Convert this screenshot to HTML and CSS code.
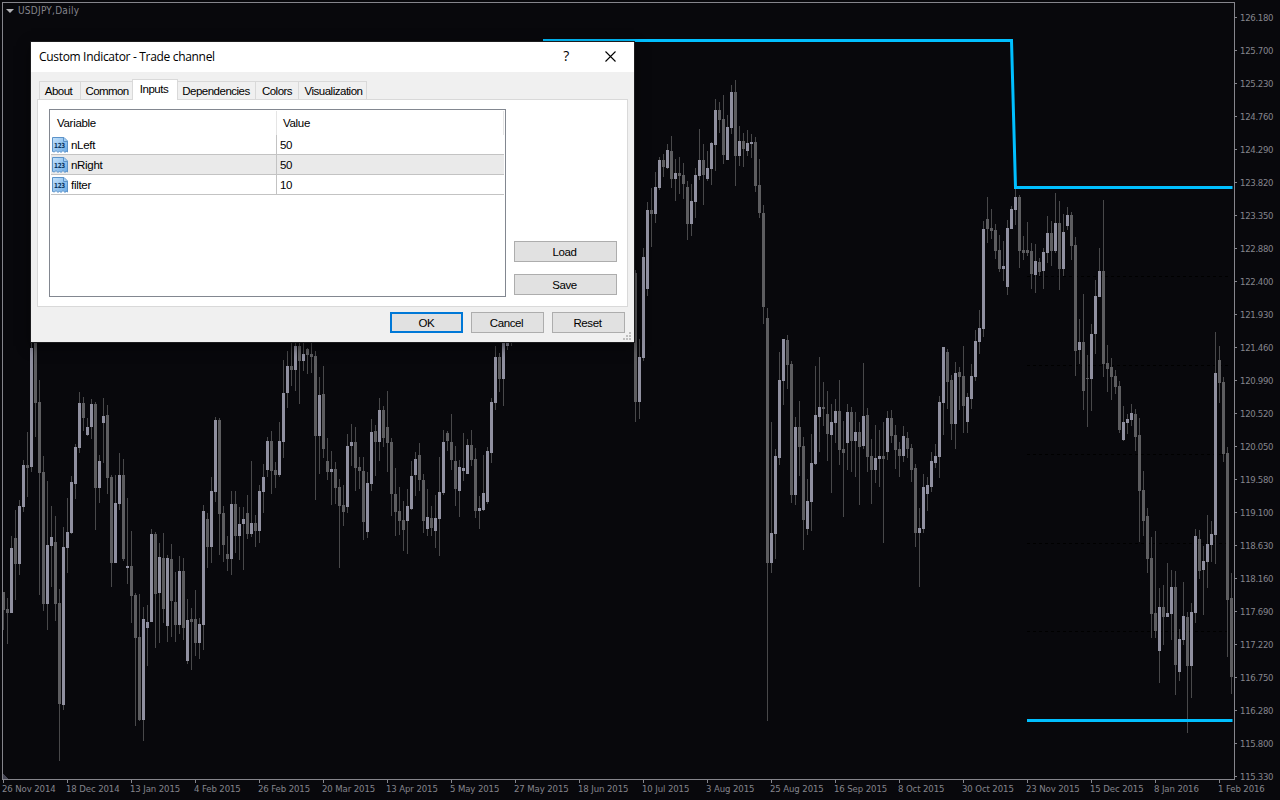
FILE: index.html
```
<!DOCTYPE html>
<html lang="en">

<head>
    <meta charset="UTF-8">
    <meta name="viewport" content="width=device-width, initial-scale=1.0">
    <title>USDJPY,Daily</title>
    <link rel="stylesheet" href="styles.css">
</head>

<body>
    <div class="chart">
        <svg class="plot" width="1235" height="780" viewBox="0 0 1235 780" shape-rendering="crispEdges">
            <path class="levels" d="M1027 276.5H1229M1027 365.5H1229M1027 454.5H1229M1027 543.5H1229M1027 631.5H1229" />
            <path class="wick" id="wicks" />
            <path class="bear" id="bears" />
            <path class="bull" id="bulls" />
            <path class="channel" d="M543 40.5H1011.5L1015.5 187.5H1232.5M1027 720.5H1232.5" shape-rendering="auto" />
            <path class="corner" d="M3 774L8 779H3Z" />
            <path class="frame" d="M1235 2.5H2.5V779.5H1234.5V2" />
        </svg>
        <div class="prices">
            <span>126.180</span>
            <span>125.700</span>
            <span>125.230</span>
            <span>124.760</span>
            <span>124.290</span>
            <span>123.820</span>
            <span>123.350</span>
            <span>122.880</span>
            <span>122.400</span>
            <span>121.930</span>
            <span>121.460</span>
            <span>120.990</span>
            <span>120.520</span>
            <span>120.050</span>
            <span>119.580</span>
            <span>119.100</span>
            <span>118.630</span>
            <span>118.160</span>
            <span>117.690</span>
            <span>117.220</span>
            <span>116.750</span>
            <span>116.280</span>
            <span>115.800</span>
            <span>115.330</span>
        </div>
        <div class="dates">
            <span>26 Nov 2014</span>
            <span>18 Dec 2014</span>
            <span>13 Jan 2015</span>
            <span>4 Feb 2015</span>
            <span>26 Feb 2015</span>
            <span>20 Mar 2015</span>
            <span>13 Apr 2015</span>
            <span>5 May 2015</span>
            <span>27 May 2015</span>
            <span>18 Jun 2015</span>
            <span>10 Jul 2015</span>
            <span>3 Aug 2015</span>
            <span>25 Aug 2015</span>
            <span>16 Sep 2015</span>
            <span>8 Oct 2015</span>
            <span>30 Oct 2015</span>
            <span>23 Nov 2015</span>
            <span>15 Dec 2015</span>
            <span>8 Jan 2016</span>
            <span>1 Feb 2016</span>
        </div>
        <div class="symbol">
            <svg width="8" height="4" viewBox="0 0 8 4"><path d="M0 0H8L4 4Z" fill="#b4b4b8" /></svg>
            <span>USDJPY,Daily</span>
        </div>
    </div>

    <svg class="defs" width="0" height="0">
        <defs>
            <linearGradient id="sheet" x1="0" y1="0" x2="1" y2="1">
                <stop offset="0" stop-color="#c4e2fb" />
                <stop offset="1" stop-color="#6aa9e4" />
            </linearGradient>
            <symbol id="int-icon" viewBox="0 0 16 16">
                <path d="M.5 .5H12L15.500 4V15L14 14L13 15.500L11 13.500L9 15.500L7.500 14L6 15.500L4 13.500L2.500 15L.5 14.500Z" fill="url(#sheet)" stroke="#5c93c9" />
                <path d="M11.500 .5V4.500H15.500" fill="#a9d0f3" stroke="#5c93c9" />
                <text x="7.500" y="11.200" text-anchor="middle" textLength="11" lengthAdjust="spacingAndGlyphs">123</text>
            </symbol>
        </defs>
    </svg>

    <div class="dialog">
        <div class="titlebar">
            <span class="title">Custom Indicator - Trade channel</span>
            <span class="help">?</span>
            <svg class="close" width="11" height="11" viewBox="0 0 11 11"><path d="M.5 .5L10.500 10.500M10.500 .5L.5 10.500" stroke="#000" stroke-width="1.100" /></svg>
        </div>
        <div class="tabs">
            <div class="tab about">About</div>
            <div class="tab common">Common</div>
            <div class="tab active">Inputs</div>
            <div class="tab dependencies">Dependencies</div>
            <div class="tab colors">Colors</div>
            <div class="tab visualization">Visualization</div>
        </div>
        <div class="pane">
            <div class="list">
                <div class="row head"><span class="name">Variable</span><span class="value">Value</span></div>
                <div class="row">
                    <span class="name"><svg width="16" height="16"><use href="#int-icon" /></svg><span>nLeft</span></span>
                    <span class="value">50</span>
                </div>
                <div class="row selected">
                    <span class="name"><svg width="16" height="16"><use href="#int-icon" /></svg><span>nRight</span></span>
                    <span class="value">50</span>
                </div>
                <div class="row">
                    <span class="name"><svg width="16" height="16"><use href="#int-icon" /></svg><span>filter</span></span>
                    <span class="value">10</span>
                </div>
            </div>
            <div class="side">
                <button>Load</button>
                <button>Save</button>
            </div>
        </div>
        <div class="footer">
            <button class="default">OK</button>
            <button>Cancel</button>
            <button>Reset</button>
        </div>
        <svg class="grip" width="8" height="8" viewBox="0 0 8 8" shape-rendering="crispEdges">
            <path d="M6 0h2v2h-2zM3 3h2v2h-2zM6 3h2v2h-2zM0 6h2v2h-2zM3 6h2v2h-2zM6 6h2v2h-2z" fill="#bfbfbf" />
        </svg>
    </div>

    <script src="candles.js"></script>
</body>

</html>
```
FILE: styles.css
```
* {
    box-sizing: border-box;
}

body {
    margin: 0;
    width: 1280px;
    height: 800px;
    overflow: hidden;
    background: #08080c;
    font-family: "Liberation Sans", Arial, sans-serif;
}

.chart {
    position: relative;
    display: grid;
    grid-template-columns: 1235px 45px;
    grid-template-rows: 780px 20px;
    color: #85858c;
    font-family: "DejaVu Sans Condensed", "DejaVu Sans", sans-serif;
    font-stretch: condensed;
    font-size: 9.5px;
    letter-spacing: -0.3px;
}

.plot {
    display: block;
    fill: none;
}

.frame {
    stroke: #85858c;
}

.corner {
    fill: #464655;
}

.wick {
    stroke: #48484a;
}

.bear {
    stroke: #5d5d60;
    stroke-width: 3;
}

.bull {
    stroke: #9090a0;
    stroke-width: 3;
}

.levels {
    stroke: #000;
    stroke-dasharray: 3 3;
}

.channel {
    stroke: #00bfff;
    stroke-width: 3;
}

.prices {
    grid-column: 2;
    grid-row: 1 / 3;
    height: 800px;
    padding-top: 1px;
    overflow: hidden;
}

.prices span {
    display: flex;
    align-items: center;
    height: 33px;
}

.prices span::before {
    content: "";
    width: 2px;
    height: 1px;
    margin-right: 3px;
    background: #85858c;
}

.dates {
    grid-column: 1;
    grid-row: 2;
    display: flex;
    padding-left: 2px;
    letter-spacing: -0.1px;
}

.dates span {
    flex: none;
    width: 64px;
    line-height: 12px;
    white-space: nowrap;
}

.dates span::before {
    content: "";
    display: block;
    width: 1px;
    height: 3px;
    margin-left: 1px;
    background: #85858c;
}

.symbol {
    position: absolute;
    left: 6px;
    top: 4px;
    display: flex;
    align-items: center;
    gap: 4px;
    font-size: 10px;
    line-height: 14px;
    letter-spacing: 0.25px;
}

.defs {
    position: absolute;
}

.defs text {
    font: bold 7px "DejaVu Sans", sans-serif;
    fill: #0c3560;
}

.dialog {
    position: absolute;
    left: 31px;
    top: 42px;
    width: 603px;
    height: 300px;
    background: #f0f0f0;
    box-shadow: 0 0 0 1px #1c1c1e, 0 4px 12px rgba(0, 0, 0, 0.6);
    color: #000;
    font-size: 11.5px;
    letter-spacing: -0.5px;
}

.titlebar {
    display: flex;
    align-items: center;
    height: 30px;
    padding: 0 18px 0 8px;
    background: #fff;
    font-family: "Open Sans", "Noto Sans", sans-serif;
    font-size: 12px;
    line-height: 16px;
    letter-spacing: -0.32px;
}

.title {
    flex: 1;
}

.help {
    margin-right: 36px;
    padding-bottom: 2px;
    font-size: 14px;
}

.close {
    margin-bottom: 2px;
}

.tabs {
    display: flex;
    align-items: flex-end;
    height: 28px;
    padding-left: 8px;
}

.tab {
    height: 19px;
    border: 1px solid #d9d9d9;
    border-left: none;
    line-height: 18px;
    text-align: center;
}

.about {
    width: 42px;
    padding-right: 3px;
    border-left: 1px solid #d9d9d9;
}

.common {
    width: 51px;
    padding-left: 1px;
    border-right: none;
    letter-spacing: -0.6px;
}

.tab.active {
    position: relative;
    width: 46px;
    height: 21px;
    padding-right: 2px;
    border-left: 1px solid #d9d9d9;
    border-bottom: none;
    background: #fff;
    line-height: 19px;
}

.dependencies {
    width: 78px;
    padding-right: 1px;
}

.colors {
    width: 43px;
}

.visualization {
    width: 68px;
    padding-left: 2px;
}

.pane {
    display: flex;
    width: 591px;
    height: 208px;
    margin: -1px 0 0 6px;
    padding: 9px 10px 9px 11px;
    border: 1px solid #d9d9d9;
    background: #fff;
}

.list {
    width: 457px;
    height: 188px;
    padding: 1px;
    border: 1px solid #828790;
}

.row {
    display: flex;
    height: 20px;
    border-bottom: 1px solid #c3c3c3;
    line-height: 21px;
}

.row .name {
    display: flex;
    align-items: center;
    gap: 3px;
    width: 226px;
    padding-left: 1px;
    border-right: 1px solid #c3c3c3;
    letter-spacing: -0.3px;
}

.name span {
    padding-top: 2px;
}

.row .value {
    flex: 1;
    padding-left: 3px;
    letter-spacing: -0.3px;
}

.row.selected {
    background: #eaeaea;
}

.row.head {
    height: 24px;
    border-bottom: none;
    border-right: 1px solid #e5e5e5;
    line-height: 24px;
}

.head .name {
    padding-left: 6px;
    border-color: #e5e5e5;
}

.head .value {
    padding-left: 6px;
}

.side {
    display: flex;
    flex-direction: column;
    justify-content: flex-end;
    gap: 12px;
    width: 103px;
    margin-left: 8px;
    padding-bottom: 2px;
}

button {
    height: 21px;
    padding: 0 2px 0 0;
    border: 1px solid #adadad;
    background: #e1e1e1;
    color: #000;
    font: inherit;
    letter-spacing: -0.4px;
}

.footer {
    display: flex;
    justify-content: flex-end;
    gap: 8px;
    padding: 5px 9px 0 0;
}

.footer button {
    width: 73px;
}

button.default {
    padding: 0;
    border: 2px solid #0078d7;
}

.grip {
    position: absolute;
    right: 3px;
    bottom: 2px;
}
```
FILE: candles.js
```
// one entry per bar: direction, then high, body top, body bottom, low
const left = `
D592,592,610,630 D598,609,613,644 U536,548,613,613 D510,538,564,600 U500,506,564,575 U460,465,507,512
D432,465,468,497 U343,348,467,472 D340,340,403,437 D380,402,473,595 D456,472,604,611 U481,545,604,630
U506,537,546,587 D516,542,604,621 D589,603,704,761 U527,547,705,710 U498,532,548,573 U476,482,533,534
U444,447,484,499 U392,403,448,453 D397,403,418,431 U418,427,435,436 U399,404,427,439 D402,404,488,530
U455,461,488,503 U398,416,423,463 D405,415,478,494 D475,477,563,587 U475,503,563,563 U453,475,504,510
D459,475,559,561 U498,566,568,584 D531,566,596,623 D593,595,638,726 D594,637,720,721 U607,619,720,741
U605,622,628,666 U529,534,622,622 D532,534,594,648 U543,557,593,643 D533,558,609,623 U555,558,626,642
D544,559,601,637 D572,602,625,642 U556,571,625,634 D558,571,628,640 U599,620,661,664 D608,619,622,670
D590,619,643,656 U618,624,643,659 U505,511,625,650 D513,519,547,568 U477,491,547,563 U417,420,492,502
D418,420,514,555 D506,513,545,562 D536,554,559,571 U491,504,559,575 D491,504,536,553 U507,524,536,560
U507,519,524,570 D495,513,534,539 U461,523,534,537 D515,523,531,547 U485,491,531,543 U464,477,492,513
U437,441,470,477 D431,441,471,494 D462,470,475,488 U422,441,475,477 U360,393,442,458 U351,366,393,408
D342,366,370,386 U342,346,370,391 D342,346,361,404 U342,354,361,371 D348,349,355,374 D343,354,357,373
D351,356,436,500 U377,395,436,474 D366,394,449,458 D438,461,472,480 U451,469,472,505 D462,469,488,504
D479,487,506,568 D485,505,512,526 U434,446,507,513 U424,442,446,466 D427,442,468,491 D457,467,471,489
D457,471,522,540 U472,483,532,538 U419,432,484,491 D425,431,442,476 U398,410,442,461 D406,410,438,447
D391,427,443,472 D438,442,494,516 D468,494,512,536 D487,511,521,535 D501,520,530,551 U489,506,521,554
U461,476,509,510 U452,459,475,496 D443,455,480,491 D474,480,521,533 U489,517,529,536 D506,518,528,536
U495,518,531,548 U457,492,519,556 U430,442,493,495 D431,433,441,451 D414,442,460,470 D446,461,489,506
U460,467,491,517 U433,468,471,481 U439,445,474,474 D430,445,460,466 D448,459,511,518 U496,508,511,529
U455,493,510,511 U447,451,502,504 U398,402,453,463 U346,357,403,410 D353,357,379,392 U340,340,379,406
U340,340,346,350 D340,340,341,346`;

const right = `
D270,273,402,422 U339,357,402,419 U248,257,358,361 U202,210,289,296 D188,210,214,247 U172,187,214,223
U157,160,188,190 D154,160,167,177 U144,150,168,169 D136,151,179,188 U159,173,179,201 D157,173,176,194
D163,175,184,199 D181,187,224,240 U184,201,224,236 U168,175,202,218 U129,160,176,180 D144,160,175,205
U151,168,179,181 U142,143,169,185 U99,110,145,171 D102,110,120,133 D95,119,155,164 U115,127,160,160
U85,92,128,134 D80,92,156,186 U126,141,156,166 D133,141,149,167 U130,143,151,156 U134,142,144,158
D137,142,186,192 D159,185,213,218 D205,213,307,324 D308,318,563,721 U422,533,563,573 U449,456,534,559
U352,380,458,465 U339,339,381,405 D335,340,365,389 D361,364,495,503 U417,427,495,505 D401,427,447,476
D437,446,520,550 U479,501,529,535 U434,463,502,531 U366,415,464,465 U357,407,417,452 D382,407,409,426
D391,414,434,461 U404,422,435,493 U399,411,423,443 D380,411,450,465 D421,449,453,517 U404,412,443,470
D407,412,441,472 U412,432,441,477 D422,432,447,505 U363,416,446,449 D408,415,457,472 D439,456,470,504
U425,458,470,483 U430,456,459,487 D422,456,459,543 U411,418,452,460 D410,418,436,443 D425,435,450,469
D442,449,456,477 U426,436,456,462 D432,438,449,458 D444,448,470,482 D464,468,533,547 U508,528,533,587
U474,487,529,533 U477,485,494,511 U452,461,487,492 U444,456,463,468 U396,402,457,478 U347,347,403,435
D349,352,382,409 D375,380,424,440 U362,373,424,449 D367,372,377,410 D346,376,406,433 U393,397,422,433
U364,376,399,409 U330,341,377,381 U310,328,342,354 U221,229,329,337 D197,219,229,243 D209,228,231,239
D224,230,251,259 D235,250,269,272 U241,266,269,281 U220,228,287,295 U206,209,229,229 U188,197,210,225
D195,197,251,268 D236,250,253,260 D222,250,253,256 D243,251,274,289 U244,261,275,293 D258,262,272,276
U248,252,271,289 U216,233,253,263 D221,233,251,266 U193,223,251,253 D201,223,269,290 U214,232,269,276
U207,215,226,230 D212,215,246,260 D237,245,351,376 U319,342,350,364 D294,342,391,410 D355,378,379,427
U324,334,379,411 U280,296,334,354 U248,271,297,297 D200,271,364,377 D345,363,369,392 D358,367,377,400
D370,376,387,394 D381,386,430,433 U406,422,440,441 U414,419,423,434 U404,413,420,426 D409,414,437,451
D418,435,491,542 D471,490,521,536 D508,516,559,573 D537,558,614,638 D531,613,631,638 U588,607,651,683
D585,607,617,645 U563,613,617,617 U570,587,614,640 D571,587,665,695 U629,639,672,681 U582,616,640,645
D612,617,666,733 U603,612,666,698 U529,536,613,623 D530,539,571,579 U546,561,570,615 U515,544,562,588
U521,534,545,562 U332,373,535,564 D346,360,383,403 D377,382,454,462 D447,453,600,657 D573,598,677,694`;

let wicks = "", bears = "", bulls = "";

function addBars(text, startX) {
    text.trim().split(/\s+/).forEach(function (bar, i) {
        const x = startX + i * 4 + 0.5;
        const [high, top, bottom, low] = bar.slice(1).split(",");
        wicks += `M${x} ${high}V${low}`;
        if (bar[0] === "U") {
            bulls += `M${x} ${top}V${bottom}`;
        } else {
            bears += `M${x} ${top}V${bottom}`;
        }
    });
}

addBars(left, 3);
addBars(right, 635);

document.getElementById("wicks").setAttribute("d", wicks);
document.getElementById("bears").setAttribute("d", bears);
document.getElementById("bulls").setAttribute("d", bulls);
```
